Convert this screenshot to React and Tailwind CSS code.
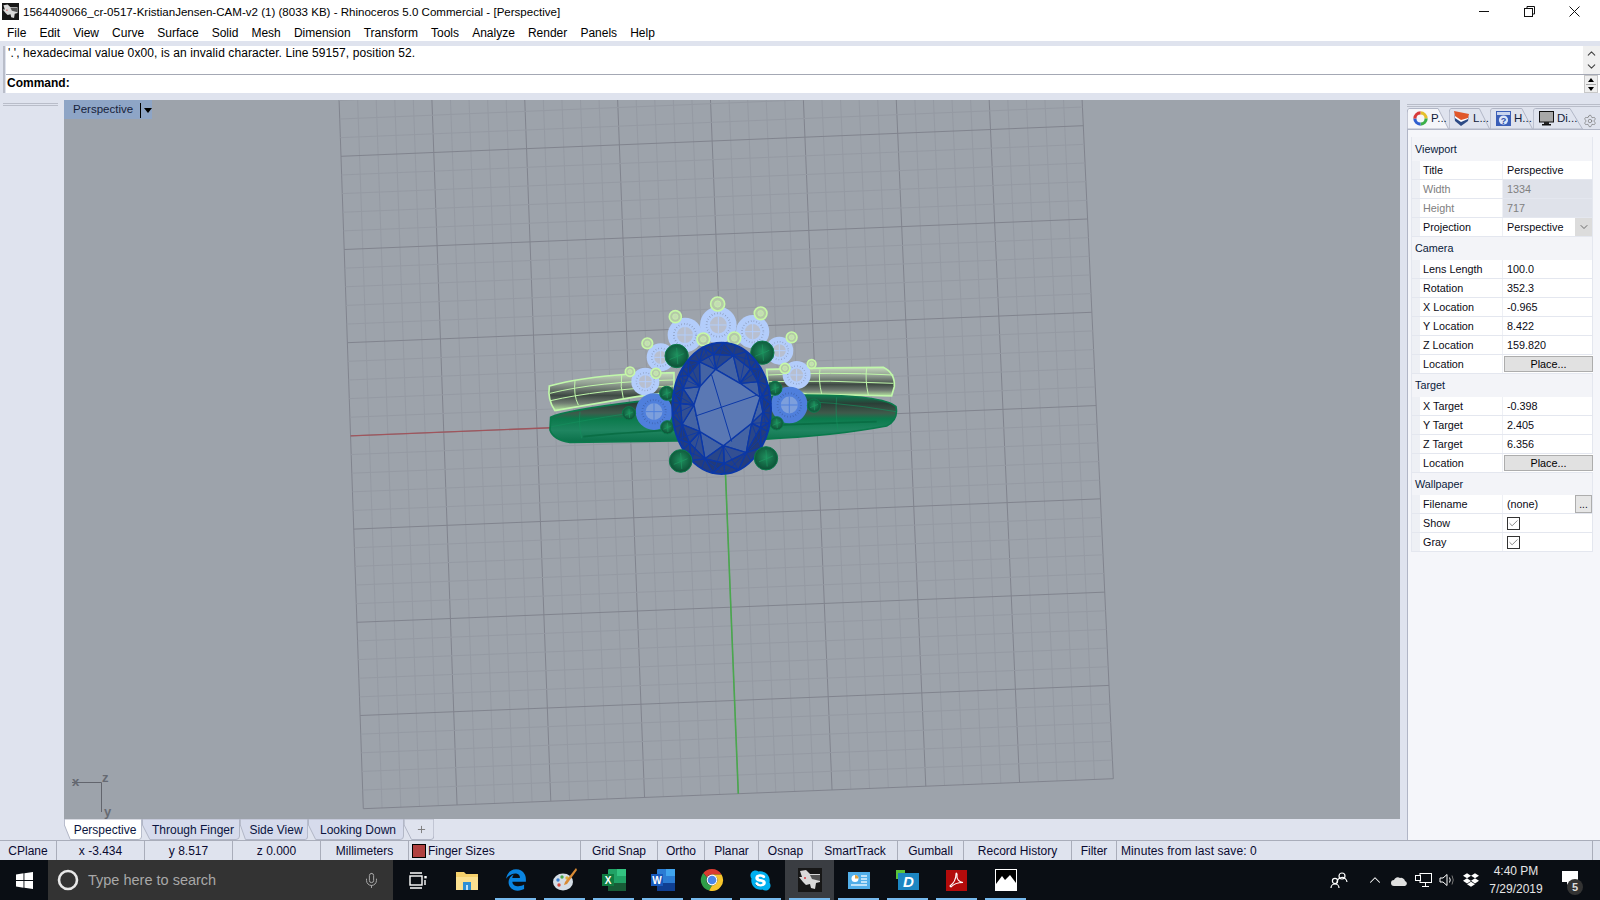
import { Mic, Settings, ChevronUp, ChevronDown, Check, Plus } from 'lucide-react';
import { FaEdgeLegacy, FaSkype, FaDropbox } from 'react-icons/fa6';

const MENU = ['File', 'Edit', 'View', 'Curve', 'Surface', 'Solid', 'Mesh', 'Dimension', 'Transform', 'Tools', 'Analyze', 'Render', 'Panels', 'Help'];

const SECTIONS = [
  {
    title: 'Viewport',
    h: 'h-[24px]',
    rows: [
      { label: 'Title', value: 'Perspective' },
      { label: 'Width', value: '1334', disabled: true },
      { label: 'Height', value: '717', disabled: true },
      { label: 'Projection', value: 'Perspective', select: true }
    ]
  },
  {
    title: 'Camera',
    h: 'h-[23px]',
    rows: [
      { label: 'Lens Length', value: '100.0' },
      { label: 'Rotation', value: '352.3' },
      { label: 'X Location', value: '-0.965' },
      { label: 'Y Location', value: '8.422' },
      { label: 'Z Location', value: '159.820' },
      { label: 'Location', button: 'Place...' }
    ]
  },
  {
    title: 'Target',
    h: 'h-[23px]',
    rows: [
      { label: 'X Target', value: '-0.398' },
      { label: 'Y Target', value: '2.405' },
      { label: 'Z Target', value: '6.356' },
      { label: 'Location', button: 'Place...' }
    ]
  },
  {
    title: 'Wallpaper',
    h: 'h-[22px]',
    rows: [
      { label: 'Filename', value: '(none)', browse: true },
      { label: 'Show', check: true },
      { label: 'Gray', check: true }
    ]
  }
];

const STATUS = [
  { text: 'CPlane', w: 'w-[57px]' },
  { text: 'x -3.434', w: 'w-[88px]' },
  { text: 'y 8.517', w: 'w-[88px]' },
  { text: 'z 0.000', w: 'w-[88px]' },
  { text: 'Millimeters', w: 'w-[88px]' },
  { text: 'Finger Sizes', w: 'w-[172px]', swatch: true },
  { text: 'Grid Snap', w: 'w-[77px]' },
  { text: 'Ortho', w: 'w-[47px]' },
  { text: 'Planar', w: 'w-[54px]' },
  { text: 'Osnap', w: 'w-[54px]' },
  { text: 'SmartTrack', w: 'w-[85px]' },
  { text: 'Gumball', w: 'w-[66px]' },
  { text: 'Record History', w: 'w-[108px]' },
  { text: 'Filter', w: 'w-[45px]' },
  { text: 'Minutes from last save: 0', w: 'w-[476px]', left: true }
];

// grid corners, page px: major rows 0..7 and columns 0..8
const lerp = (a, b, t) => a + (b - a) * t;
const gridPt = (u, v) => {
  const top = [lerp(341, 1083.3, u / 8), lerp(156.3, 125.7, u / 8)];
  const bot = [lerp(363.3, 1113.3, u / 8), lerp(808.7, 778.7, u / 8)];
  return [lerp(top[0], bot[0], v / 7) - 64, lerp(top[1], bot[1], v / 7) - 100];
};

function Grid() {
  const lines = [];
  for (let i = 0; i <= 40; i++) {
    const u = i / 5;
    const a = gridPt(u, -1);
    const b = gridPt(u, 7);
    lines.push(<line key={'u' + i} x1={a[0]} y1={a[1]} x2={b[0]} y2={b[1]} stroke={i % 5 === 0 ? '#81848e' : '#959aa3'} strokeWidth="1" />);
  }
  for (let i = 0; i <= 40; i++) {
    const v = i / 5 - 1;
    const a = gridPt(0, v);
    const b = gridPt(8, v);
    lines.push(<line key={'v' + i} x1={a[0]} y1={a[1]} x2={b[0]} y2={b[1]} stroke={i % 5 === 0 ? '#81848e' : '#959aa3'} strokeWidth="1" />);
  }
  const o = gridPt(4, 3);
  const r = gridPt(0, 3);
  const g = gridPt(4, 7);
  return (
    <g>
      {lines}
      <line x1={r[0]} y1={r[1]} x2={o[0]} y2={o[1]} stroke="#a0555c" strokeWidth="1.4" />
      <line x1={o[0]} y1={o[1]} x2={g[0]} y2={g[1]} stroke="#4aa84e" strokeWidth="1.6" />
    </g>
  );
}

// table of the oval stone, in the ring's own 3x units
const CX = 575;
const CY = 385;
const RX = 148;
const RY = 197;
const TABLE = [[557, 268], [630, 310], [690, 352], [665, 430], [580, 497], [510, 455], [492, 375], [510, 320]];
const perim = (a, s = 1) => [CX + RX * s * Math.cos(a), CY + RY * s * Math.sin(a)];
const ANGLES = TABLE.map(([x, y]) => Math.atan2((y - CY) / RY, (x - CX) / RX));

function OvalStone() {
  const stroke = '#0b38a8';
  const parts = [];
  TABLE.forEach((t, i) => {
    const n = TABLE[(i + 1) % 8];
    let d = ANGLES[(i + 1) % 8] - ANGLES[i];
    if (d < 0) d += Math.PI * 2;
    const a0 = ANGLES[i];
    const am = a0 + d / 2;
    const a1 = a0 + d;
    const p0 = perim(a0);
    const pm = perim(am);
    const p1 = perim(a1);
    const s0 = perim(a0, 0.84);
    const sm = perim(am, 0.84);
    const s1 = perim(a1, 0.84);
    const q = perim(a0 + d / 4);
    const q2 = perim(a0 + (d * 3) / 4);
    const k = 'f' + i;
    parts.push(
      <g key={k} stroke={stroke} strokeWidth="4" fill="none">
        <polygon points={`${t} ${n} ${sm}`} fill="#4564a4" />
        <polygon points={`${t} ${sm} ${s0}`} fill="#2a4688" />
        <polygon points={`${n} ${sm} ${s1}`} fill="#334f92" />
        <polygon points={`${s0} ${q} ${sm}`} fill="#213a7a" />
        <polygon points={`${sm} ${q2} ${s1}`} fill="#263f80" />
        <line x1={t[0]} y1={t[1]} x2={p0[0]} y2={p0[1]} />
        <line x1={sm[0]} y1={sm[1]} x2={pm[0]} y2={pm[1]} strokeWidth="3" />
        <line x1={s0[0]} y1={s0[1]} x2={q[0]} y2={q[1]} strokeWidth="3" />
        <line x1={s1[0]} y1={s1[1]} x2={q2[0]} y2={q2[1]} strokeWidth="3" />
        <line x1={sm[0]} y1={sm[1]} x2={p0[0]} y2={p0[1]} strokeWidth="2.5" />
        <line x1={sm[0]} y1={sm[1]} x2={p1[0]} y2={p1[1]} strokeWidth="2.5" />
        <line x1={t[0]} y1={t[1]} x2={q[0]} y2={q[1]} strokeWidth="2.5" />
        <line x1={n[0]} y1={n[1]} x2={q2[0]} y2={q2[1]} strokeWidth="2.5" />
      </g>
    );
  });
  return (
    <g>
      <ellipse cx={CX} cy={CY} rx={RX} ry={RY} fill="#243d7e" />
      {parts}
      <polygon points={TABLE.join(' ')} fill="#5a78b4" stroke={stroke} strokeWidth="4" />
      <line x1="545" y1="285" x2="605" y2="485" stroke={stroke} strokeWidth="3" />
      <line x1="497" y1="408" x2="682" y2="345" stroke={stroke} strokeWidth="3" />
      <ellipse cx={CX} cy={CY} rx={RX} ry={RY} fill="none" stroke={stroke} strokeWidth="6" />
    </g>
  );
}

function RoundStone({ x, y, r, fill, core, dots = '#7d8aa6' }) {
  return (
    <g>
      <circle cx={x} cy={y} r={r} fill={fill} />
      <circle cx={x} cy={y} r={r * 0.64} fill="none" stroke={dots} strokeWidth={r * 0.1} strokeDasharray="1.5 7" />
      <circle cx={x} cy={y} r={r * 0.46} fill={core} />
      <line x1={x - r * 0.46} y1={y} x2={x + r * 0.46} y2={y} stroke={fill} strokeWidth="3" />
      <line x1={x} y1={y - r * 0.46} x2={x} y2={y + r * 0.46} stroke={fill} strokeWidth="3" />
    </g>
  );
}

function LightProng({ x, y, r }) {
  return (
    <g>
      <circle cx={x} cy={y} r={r} fill="#b4c8a8" stroke="#c6f8a6" strokeWidth="5" />
      <circle cx={x} cy={y} r={r * 0.45} fill="#c4dcb4" stroke="#c6f8a6" strokeWidth="2" />
    </g>
  );
}

function GreenBall({ x, y, r }) {
  return (
    <g>
      <circle cx={x} cy={y} r={r} fill="url(#ball)" stroke="#0c7a4c" strokeWidth="3" />
      <line x1={x - r * 0.6} y1={y + r * 0.3} x2={x + r * 0.6} y2={y - r * 0.2} stroke="#1c9a62" strokeWidth="2" />
      <line x1={x} y1={y - r * 0.7} x2={x + r * 0.1} y2={y + r * 0.7} stroke="#1c9a62" strokeWidth="2" />
    </g>
  );
}

function Ring() {
  return (
    <g transform="translate(466 180) scale(0.3333)">
      <defs>
        <linearGradient id="backBand" x1="0" y1="0" x2="0" y2="1">
          <stop offset="0" stopColor="#c4d8bc" />
          <stop offset="0.3" stopColor="#8f9c90" />
          <stop offset="0.6" stopColor="#3f4a44" />
          <stop offset="0.8" stopColor="#707c72" />
          <stop offset="1" stopColor="#b8e8a4" />
        </linearGradient>
        <linearGradient id="frontBand" x1="0" y1="0" x2="0" y2="1">
          <stop offset="0" stopColor="#0d7d50" />
          <stop offset="0.18" stopColor="#2a3f37" />
          <stop offset="0.38" stopColor="#3f5a4b" />
          <stop offset="0.5" stopColor="#0b7a4c" />
          <stop offset="0.75" stopColor="#1f8560" />
          <stop offset="1" stopColor="#0a7049" />
        </linearGradient>
        <radialGradient id="ball" cx="0.5" cy="0.45" r="0.6">
          <stop offset="0" stopColor="#1f8f5e" />
          <stop offset="1" stopColor="#0b4a32" />
        </radialGradient>
      </defs>

      <g stroke="#c0f8aa" strokeWidth="5" fill="url(#backBand)">
        <path d="M58 318 Q150 292 300 282 L432 278 L432 335 L320 350 L75 392 Q52 360 58 318 Z" />
        <path d="M710 268 Q900 262 1060 262 Q1096 280 1093 320 L1085 348 L830 342 L715 322 Z" />
      </g>
      <g stroke="#c0f8aa" strokeWidth="3" fill="none">
        <path d="M60 340 Q200 305 430 300" />
        <path d="M62 362 Q200 330 430 318" />
        <path d="M715 285 Q900 275 1090 285" />
        <path d="M715 305 Q900 300 1090 310" />
        <path d="M135 302 Q130 345 145 375" />
        <path d="M275 285 Q270 320 280 355" />
        <path d="M870 268 Q865 300 875 342" />
        <path d="M1010 264 Q1005 300 1015 345" />
      </g>

      <path d="M62 412 Q100 392 320 365 L830 345 Q1060 345 1098 380 Q1106 420 1070 438 Q900 470 650 480 L120 487 Q70 480 60 450 Z" fill="url(#frontBand)" stroke="#0a7a4c" strokeWidth="5" />
      <path d="M160 470 Q400 445 1040 425" fill="none" stroke="#0a6e45" strokeWidth="5" />
      <g stroke="#13905c" strokeWidth="2" fill="none">
        <path d="M65 440 Q300 395 430 385" />
        <path d="M740 365 Q900 360 1098 395" />
        <path d="M150 395 Q145 430 155 475" />
        <path d="M920 352 Q915 400 925 455" />
      </g>

      <RoundStone x={346} y={305} r={42} fill="#b3cdfb" core="#b8bfcf" />
      <RoundStone x={392} y={232} r={42} fill="#b3cdfb" core="#b8bfcf" />
      <RoundStone x={465} y={165} r={52} fill="#b3cdfb" core="#b8bfcf" />
      <RoundStone x={565} y={135} r={55} fill="#b3cdfb" core="#b8bfcf" />
      <RoundStone x={668} y={155} r={50} fill="#b3cdfb" core="#b8bfcf" />
      <RoundStone x={748} y={212} r={42} fill="#b3cdfb" core="#b8bfcf" />
      <RoundStone x={800} y={285} r={42} fill="#b3cdfb" core="#b8bfcf" />
      <RoundStone x={372} y={395} r={55} fill="#4f7fdc" core="#7d9fdc" dots="#3a5a9c" />
      <RoundStone x={778} y={375} r={55} fill="#4f7fdc" core="#7d9fdc" dots="#3a5a9c" />

      <LightProng x={563} y={72} r={21} />
      <LightProng x={436} y={110} r={18} />
      <LightProng x={692} y={100} r={19} />
      <LightProng x={352} y={190} r={16} />
      <LightProng x={785} y={172} r={16} />
      <LightProng x={300} y={275} r={14} />
      <LightProng x={378} y={280} r={15} />
      <LightProng x={765} y={265} r={15} />
      <LightProng x={845} y={252} r={13} />
      <LightProng x={520} y={178} r={19} />
      <LightProng x={613} y={175} r={19} />

      <GreenBall x={297} y={400} r={20} />
      <GreenBall x={852} y={377} r={20} />
      <GreenBall x={410} y={340} r={21} />
      <GreenBall x={412} y={442} r={20} />
      <GreenBall x={735} y={325} r={21} />
      <GreenBall x={740} y={430} r={20} />
      <GreenBall x={440} y={228} r={35} />
      <GreenBall x={697} y={218} r={35} />

      <OvalStone />

      <GreenBall x={452} y={543} r={34} />
      <GreenBall x={708} y={535} r={35} />
    </g>
  );
}

function RhinoIcon({ size }) {
  return (
    <svg width={size} height={size} viewBox="0 0 24 24" className="shrink-0">
      <rect width="24" height="24" fill="#171717" />
      <path d="M2 3 L8 2 L12 6 L22 6 L22 14 L18 15 L17 21 L13 20 L12 16 L8 17 L5 14 L1 9 L4 9 Z" fill="#d9d9d9" />
      <path d="M12 7 L22 7 L22 13 L14 11 Z" fill="#555" />
      <circle cx="7" cy="10" r="1" fill="#d8393f" />
    </svg>
  );
}

function TabShape({ active }) {
  return (
    <svg className="absolute inset-0 h-full w-full" viewBox="0 0 100 21" preserveAspectRatio="none">
      <path d="M0.5 0 L99.5 0 L99.5 17 Q99.5 20.5 96 20.5 L8 20.5 L0.5 6 Z" fill={active ? '#ffffff' : '#d6dbec'} stroke="#b1b6c6" strokeWidth="1" vectorEffect="non-scaling-stroke" />
    </svg>
  );
}

function BottomTab({ label, w, active }) {
  return (
    <div className={`relative flex h-[21px] items-center justify-center pl-[4px] ${w}`}>
      <TabShape active={active} />
      <span className="relative">{label}</span>
    </div>
  );
}

function PanelTab({ w, icon, label, active }) {
  return (
    <div className={`relative flex h-[21px] items-center gap-[3px] pl-[5px] ${w}`}>
      <svg className="absolute inset-0 h-full w-full" viewBox="0 0 100 21" preserveAspectRatio="none">
        <path d="M0.5 21 L0.5 5 Q0.5 0.5 5 0.5 L74 0.5 L99 21 Z" fill={active ? '#f5f6fa' : '#dfe3ee'} stroke="#b1b6c6" strokeWidth="1" vectorEffect="non-scaling-stroke" />
      </svg>
      <span className="relative flex h-[16px] w-[16px] items-center justify-center">{icon}</span>
      <span className="relative text-[11.5px] text-[#10203a]">{label}</span>
    </div>
  );
}

function PropRow({ row }) {
  const muted = row.disabled ? 'text-[#808080]' : 'text-[#0a0a14]';
  return (
    <div className="flex h-[19px] border-b border-[#e4e7ef] bg-[#eef0f5]">
      <div className="w-[8px] shrink-0" />
      <div className={`flex w-[82px] shrink-0 items-center bg-white pl-[3px] ${muted}`}>{row.label}</div>
      <div className={`ml-[1px] flex flex-1 items-center pl-[4px] ${row.disabled ? 'bg-[#dfe2ea]' : 'bg-white'} ${muted}`}>
        {row.value && <span className="flex-1">{row.value}</span>}
        {row.select && (
          <span className="flex h-full w-[17px] items-center justify-center bg-[#dcdcdc]">
            <ChevronDown size={12} strokeWidth={1.5} color="#444" />
          </span>
        )}
        {row.browse && (
          <span className="flex h-full w-[17px] items-center justify-center border border-[#adadad] bg-[#e6e6e6] text-[10px]">...</span>
        )}
        {row.button && (
          <span className="-ml-[3px] flex h-[16px] w-[89px] items-center justify-center border border-[#adadad] bg-[#e1e1e1] text-black">{row.button}</span>
        )}
        {row.check && (
          <span className="flex h-[13px] w-[13px] items-center justify-center border border-[#333] bg-white">
            <Check size={11} strokeWidth={1.5} color="#555" />
          </span>
        )}
      </div>
    </div>
  );
}

function PropsPanel() {
  return (
    <div className="flex-1 border-t border-l border-[#b1b6c6] bg-[#f5f6fa] px-[3px] pt-[7px] pb-0 text-[10.8px]">
      <div className="w-[182px] border-x border-[#e4e7ef]">
        {SECTIONS.map((s) => (
          <div key={s.title}>
            <div className={`flex items-center bg-[#f3f4f8] pl-[3px] text-[#0a1a3a] ${s.h}`}>{s.title}</div>
            {s.rows.map((r) => <PropRow key={s.title + r.label} row={r} />)}
          </div>
        ))}
      </div>
    </div>
  );
}

function TaskIcon({ children, active, running = true }) {
  return (
    <div className={`relative flex h-full w-[49px] items-center justify-center ${active ? 'bg-[#3a3d42]' : ''}`}>
      {children}
      {running && <span className="absolute right-[4px] bottom-0 left-[4px] h-[2px] bg-[#76b9ed]" />}
    </div>
  );
}

function Chrome() {
  return (
    <svg width="24" height="24" viewBox="0 0 24 24">
      <path d="M12 1 A11 11 0 0 1 21.5 6.5 L12 6.5 A5.5 5.5 0 0 0 7 9.5 L3.3 5 A11 11 0 0 1 12 1 Z" fill="#d93b30" />
      <path d="M3.3 5 L7 9.5 A5.5 5.5 0 0 0 12 17.5 L9 22.6 A11 11 0 0 1 3.3 5 Z" fill="#2f9e48" />
      <path d="M21.5 6.5 A11 11 0 0 1 9 22.6 L12 17.5 A5.5 5.5 0 0 0 16.5 9 L12 6.5 Z" fill="#f6c52c" />
      <circle cx="12" cy="12" r="5.4" fill="#fff" />
      <circle cx="12" cy="12" r="4.3" fill="#4a86e8" />
    </svg>
  );
}

function Taskbar() {
  return (
    <div className="flex h-[40px] shrink-0 items-stretch bg-[#0a0e14] text-white">
      <div className="flex w-[48px] items-center justify-center">
        <svg width="17" height="17" viewBox="0 0 17 17" fill="#fff">
          <path d="M0 2.4 L7.5 1.3 V8 H0 Z M8.4 1.2 L17 0 V8 H8.4 Z M0 9 H7.5 V15.7 L0 14.6 Z M8.4 9 H17 V17 L8.4 15.8 Z" />
        </svg>
      </div>
      <div className="flex w-[345px] items-center bg-[#333333] pl-[8px]">
        <svg width="24" height="24" viewBox="0 0 24 24" fill="none">
          <circle cx="12" cy="12" r="9" stroke="#e8e8e8" strokeWidth="2.6" />
        </svg>
        <span className="ml-[8px] flex-1 pt-[2px] text-[14.5px] text-[#a8a8a8]">Type here to search</span>
        <Mic size={17} strokeWidth={1.4} color="#a8a8a8" className="mr-[13px]" />
      </div>
      <TaskIcon running={false}>
        <svg width="18" height="17" viewBox="0 0 18 17" fill="none" stroke="#fff" strokeWidth="1.4">
          <path d="M1 1 H13 M1 16 H13" />
          <rect x="1" y="4" width="12" height="9" />
          <rect x="15.3" y="4" width="2.4" height="2.4" fill="#fff" stroke="none" />
          <path d="M16 8 V13" />
        </svg>
      </TaskIcon>
      <TaskIcon running={false}>
        <svg width="22" height="20" viewBox="0 0 22 20">
          <path d="M0 2 H8 L10 4 H22 V20 H0 Z" fill="#f5d06b" />
          <rect x="0" y="7" width="22" height="13" fill="#fbe08f" />
          <rect x="7" y="12" width="8" height="8" fill="#2b8fd6" />
          <rect x="10" y="15" width="2" height="5" fill="#bfe3fb" />
        </svg>
      </TaskIcon>
      <TaskIcon><FaEdgeLegacy size={22} color="#0a84e0" /></TaskIcon>
      <TaskIcon>
        <svg width="26" height="26" viewBox="0 0 26 26">
          <ellipse cx="11" cy="15" rx="10" ry="8.5" fill="#d5dde6" />
          <circle cx="6" cy="13" r="1.7" fill="#3b7ed0" />
          <circle cx="10" cy="10" r="1.7" fill="#49a84c" />
          <circle cx="15" cy="11" r="1.7" fill="#e0b13a" />
          <circle cx="7" cy="18" r="1.7" fill="#d8483c" />
          <path d="M24 1 L25 3 L15 17 L12 18 L13 15 Z" fill="#d98a34" />
        </svg>
      </TaskIcon>
      <TaskIcon>
        <svg width="24" height="22" viewBox="0 0 24 22">
          <rect x="6" y="0" width="18" height="22" rx="1" fill="#21a366" />
          <rect x="15" y="0" width="9" height="7" fill="#33c481" />
          <rect x="6" y="14" width="18" height="8" fill="#185c37" />
          <rect x="0" y="5" width="12" height="12" fill="#107c41" />
          <text x="6" y="15" textAnchor="middle" fontSize="10" fontWeight="700" fill="#fff">X</text>
        </svg>
      </TaskIcon>
      <TaskIcon>
        <svg width="24" height="22" viewBox="0 0 24 22">
          <rect x="6" y="0" width="18" height="22" rx="1" fill="#2b7cd3" />
          <rect x="15" y="0" width="9" height="7" fill="#41a5ee" />
          <rect x="6" y="14" width="18" height="8" fill="#103f91" />
          <rect x="0" y="5" width="12" height="12" fill="#185abd" />
          <text x="6" y="15" textAnchor="middle" fontSize="10" fontWeight="700" fill="#fff">W</text>
        </svg>
      </TaskIcon>
      <TaskIcon><Chrome /></TaskIcon>
      <TaskIcon>
        <span className="relative flex items-center justify-center">
          <span className="absolute h-[14px] w-[14px] rounded-full bg-white" />
          <FaSkype size={23} color="#00aff0" className="relative" />
        </span>
      </TaskIcon>
      <TaskIcon active><RhinoIcon size={24} /></TaskIcon>
      <TaskIcon>
        <svg width="22" height="17" viewBox="0 0 22 17">
          <rect width="22" height="17" fill="#52aee8" />
          <circle cx="7" cy="6.5" r="3.5" fill="#fff" />
          <path d="M7 6.5 V3 A3.5 3.5 0 0 1 10.5 6.5 Z" fill="#e2a13b" />
          <path d="M13 4 H19 M13 7 H19 M13 10 H19 M3 13 H19" stroke="#e4f3fd" strokeWidth="1.3" />
        </svg>
      </TaskIcon>
      <TaskIcon>
        <svg width="23" height="20" viewBox="0 0 23 20">
          <rect x="0" y="0" width="9" height="9" fill="#58c23a" />
          <rect x="2" y="3" width="21" height="17" fill="#1c86c2" />
          <text x="12.5" y="17" textAnchor="middle" fontSize="15" fontWeight="700" fontStyle="italic" fill="#fff">D</text>
        </svg>
      </TaskIcon>
      <TaskIcon>
        <svg width="21" height="21" viewBox="0 0 21 21">
          <rect width="21" height="21" fill="#b30b0b" />
          <path d="M4 16 C8 13 10 8 10 4 C10 2.5 11.5 3 11 6 C10.5 9 13 12 17 12.5 C13 12.5 8 13.5 5 17 Z" fill="none" stroke="#fff" strokeWidth="1.1" />
        </svg>
      </TaskIcon>
      <TaskIcon>
        <svg width="22" height="22" viewBox="0 0 22 22">
          <rect x="0.5" y="0.5" width="21" height="21" fill="#000" stroke="#fff" />
          <path d="M1 20 V15 L7 7 L10 11 L15 6 L21 14 V21 H1 Z" fill="#fff" />
        </svg>
      </TaskIcon>
      <div className="flex-1" />
      <svg width="18" height="18" viewBox="0 0 18 18" fill="none" stroke="#fff" strokeWidth="1.2" className="mr-[18px] self-center">
        <circle cx="12" cy="5" r="3" />
        <path d="M7 12 A5 5 0 0 1 17 11" />
        <circle cx="5" cy="10" r="2.6" />
        <path d="M1 17 A4 4 0 0 1 9 17" />
      </svg>
      <ChevronUp size={18} strokeWidth={1.4} color="#fff" className="mr-[7px] self-center" />
      <svg width="17" height="11" viewBox="0 0 17 11" fill="#e0e0e0" className="mr-[7px] self-center">
        <path d="M3 11 A3 3 0 0 1 3 5 A4 4 0 0 1 9 3 A4 4 0 0 1 14 6 A2.6 2.6 0 0 1 14 11 Z" />
      </svg>
      <svg width="17" height="14" viewBox="0 0 17 14" fill="none" stroke="#fff" className="mr-[7px] self-center">
        <rect x="5" y="0.5" width="11.5" height="9" />
        <rect x="0.5" y="2.5" width="5" height="5" fill="#0a0e14" />
        <path d="M10.5 9.5 V13 M7 13.5 H14" />
      </svg>
      <svg width="17" height="14" viewBox="0 0 17 14" fill="none" stroke="#fff" className="mr-[7px] self-center">
        <path d="M1 5 H4 L8 1.5 V12.5 L4 9 H1 Z" />
        <path d="M10.5 4.5 Q12 7 10.5 9.5" />
        <path d="M13 2.5 Q15.5 7 13 11.5" stroke="#777" />
      </svg>
      <FaDropbox size={16} color="#fff" className="mr-[1px] self-center" />
      <div className="flex w-[72px] flex-col items-center justify-center text-[12px] leading-[18px] text-[#e6e6e6]">
        <span>4:40 PM</span>
        <span>7/29/2019</span>
      </div>
      <div className="relative flex w-[48px] items-center pl-[10px]">
        <svg width="16" height="15" viewBox="0 0 16 15" fill="#fff" className="-mt-[3px]">
          <path d="M0 0 H16 V11 H8 L5 14 V11 H0 Z" />
        </svg>
        <span className="absolute top-[19px] left-[15px] flex h-[16px] w-[16px] items-center justify-center rounded-full bg-[#333] text-[11px] font-bold text-[#ddd]">5</span>
      </div>
    </div>
  );
}

export default function App() {
  return (
    <div className="flex h-[900px] w-[1600px] flex-col overflow-hidden bg-[#dfe3ee] font-['Liberation_Sans',Arial,sans-serif] text-[12px] text-black">
      {/* Title bar */}
      <div className="flex h-[22px] shrink-0 items-center bg-white pl-[2px]">
        <RhinoIcon size={17} />
        <span className="ml-[4px] flex-1 pt-[3px] text-[11.55px]">1564409066_cr-0517-KristianJensen-CAM-v2 (1) (8033 KB) - Rhinoceros 5.0 Commercial - [Perspective]</span>
        <div className="flex items-center gap-[34px] pr-[20px]">
          <svg width="11" height="11" viewBox="0 0 11 11" stroke="#111" fill="none"><path d="M0 5.5 H10" /></svg>
          <svg width="11" height="11" viewBox="0 0 11 11" stroke="#111" fill="none">
            <rect x="0.5" y="2.5" width="8" height="8" />
            <path d="M3 2.5 V0.5 H10.5 V8 H8.5" />
          </svg>
          <svg width="11" height="11" viewBox="0 0 11 11" stroke="#111" fill="none"><path d="M0.5 0.5 L10.5 10.5 M10.5 0.5 L0.5 10.5" /></svg>
        </div>
      </div>

      {/* Menu */}
      <div className="flex h-[19px] shrink-0 items-center gap-[13.1px] bg-white pt-[2px] pl-[7px]">
        {MENU.map((m) => <span key={m}>{m}</span>)}
      </div>

      {/* Command area */}
      <div className="mt-[5px] flex h-[47px] shrink-0 pl-[3px]">
        <div className="mr-[1px] w-[2px] border-x border-[#b9bdc9]" />
        <div className="flex flex-1 flex-col">
          <div className="flex h-[28px] bg-white">
            <span className="flex-1 pl-[2px] leading-[14px] tracking-[0.1px]">'.', hexadecimal value 0x00, is an invalid character. Line 59157, position 52.</span>
            <div className="flex w-[17px] flex-col items-center justify-center bg-[#f0f0f0]">
              <ChevronUp size={13} strokeWidth={2} color="#444" />
              <ChevronDown size={13} strokeWidth={2} color="#444" />
            </div>
          </div>
          <div className="flex h-[19px] border-t border-[#a4a8b4] bg-white">
            <span className="flex-1 pl-[1px] leading-[16px] font-bold">Command:</span>
            <div className="mr-[2px] flex w-[14px] flex-col items-center justify-center gap-[1px] border border-[#c8c8c8] bg-[#efefef]">
              <span className="mb-[1px] h-0 w-0 border-x-[3.5px] border-b-[4px] border-x-transparent border-b-black" />
              <span className="h-px w-[10px] bg-[#aaa]" />
              <span className="mt-[1px] h-0 w-0 border-x-[3.5px] border-t-[4px] border-x-transparent border-t-black" />
            </div>
          </div>
        </div>
      </div>

      {/* Main area */}
      <div className="mt-[7px] flex h-[740px] shrink-0">
        <div className="w-[64px] shrink-0 pt-[3px] pl-[3px]">
          <div className="h-[3px] w-[55px] border-y border-[#b9bdc9]" />
        </div>

        <div className="flex w-[1336px] shrink-0 flex-col">
          <div className="relative h-[719px] bg-[#9da3ab]">
            <svg width="1336" height="719" className="block">
              <Grid />
              <Ring />
              <g stroke="#62656d" fill="none" strokeWidth="1">
                <path d="M8 682.5 H37.5 V712" />
              </g>
              <g fill="#666a72" fontSize="13" fontWeight="700" fontFamily="Liberation Sans">
                <text x="8" y="686">x</text>
                <text x="38" y="682">z</text>
                <text x="40" y="716">y</text>
              </g>
            </svg>
            <div className="absolute top-0 left-0 flex h-[19px] w-[88px] items-center bg-[#8ea5c6] pt-[1px] pl-[9px] text-[11.5px]">
              <span className="text-[#16223a]">Perspective</span>
              <span className="ml-[7px] h-[15px] w-px shrink-0 bg-black" />
              <span className="ml-[3px] h-0 w-0 shrink-0 border-x-[4px] border-t-[5px] border-x-transparent border-t-black" />
            </div>
          </div>
          <div className="flex h-[21px] text-[#0a1440]">
            <BottomTab label="Perspective" w="w-[78px]" active />
            <BottomTab label="Through Finger" w="w-[98px]" />
            <BottomTab label="Side View" w="w-[68px]" />
            <BottomTab label="Looking Down" w="w-[96px]" />
            <div className="relative flex h-[21px] w-[30px] items-center justify-center pl-[4px]">
              <svg className="absolute inset-0 h-full w-full" viewBox="0 0 100 21" preserveAspectRatio="none">
                <path d="M0.5 0 L99.5 0 L99.5 17 Q99.5 20.5 90 20.5 L25 20.5 L0.5 6 Z" fill="#dfe3ee" stroke="#b1b6c6" strokeWidth="1" vectorEffect="non-scaling-stroke" />
              </svg>
              <Plus size={11} strokeWidth={2} color="#777" className="relative" />
            </div>
          </div>
        </div>

        {/* Right panel */}
        <div className="ml-[7px] flex w-[193px] shrink-0 flex-col pt-[4px]">
          <div className="h-[3px] w-full border-y border-[#b9bdc9]" />
          <div className="mt-[1px] flex h-[21px] items-end">
            <PanelTab
              w="w-[42px]"
              active
              label="P..."
              icon={
                <svg width="15" height="15" viewBox="0 0 16 16" fill="none" strokeWidth="3.4">
                  <path d="M8 2 A6 6 0 0 1 14 8" stroke="#e5c02c" />
                  <path d="M14 8 A6 6 0 0 1 8 14" stroke="#3cb04a" />
                  <path d="M8 14 A6 6 0 0 1 2 8" stroke="#2f5fd0" />
                  <path d="M2 8 A6 6 0 0 1 8 2" stroke="#d83a3a" />
                </svg>
              }
            />
            <PanelTab
              w="w-[41px]"
              label="L..."
              icon={
                <svg width="16" height="15" viewBox="0 0 16 15">
                  <path d="M0 1 L15 4 L14 10 L7 15 L1 10 Z" fill="#2c4a85" />
                  <path d="M0 1 L15 4 L14 8 L7 11 L1 7 Z" fill="#fff" />
                  <path d="M0 0 L15 3 L14 7 L7 9 L1 5 Z" fill="#e0572a" />
                </svg>
              }
            />
            <PanelTab
              w="w-[43px]"
              label="H..."
              icon={
                <svg width="15" height="15" viewBox="0 0 15 15">
                  <rect width="15" height="15" fill="#3b5fb8" />
                  <rect x="1" y="1" width="13" height="3" fill="#c9d5ee" />
                  <circle cx="7.5" cy="9" r="4.6" fill="#dce6f8" />
                  <text x="7.5" y="12.5" textAnchor="middle" fontSize="9" fontWeight="700" fill="#2b4fa8">?</text>
                </svg>
              }
            />
            <PanelTab
              w="w-[50px]"
              label="Di..."
              icon={
                <svg width="15" height="15" viewBox="0 0 15 15">
                  <rect x="0.5" y="0.5" width="14" height="10.5" fill="#a8a8a8" stroke="#111" />
                  <rect x="5" y="11" width="5" height="2" fill="#222" />
                  <rect x="3" y="13" width="9" height="1.5" fill="#111" />
                </svg>
              }
            />
            <Settings size={14} strokeWidth={1.2} color="#777" className="mb-[1px] ml-[0px]" />
          </div>
          <PropsPanel />
        </div>
      </div>

      {/* Status bar */}
      <div className="flex h-[20px] shrink-0 border-t border-[#a9adba] text-[#0a0a30]">
        {STATUS.map((s) => (
          <div
            key={s.text}
            className={`flex h-full shrink-0 items-center border-r border-[#a9adba] ${s.w} ${s.swatch ? 'pl-[3px]' : s.left ? 'pl-[4px] tracking-[0.1px]' : 'justify-center'}`}
          >
            {s.swatch && <span className="mr-[2px] h-[14px] w-[14px] border border-black bg-[#b04040]" />}
            {s.text}
          </div>
        ))}
      </div>

      <Taskbar />
    </div>
  );
}
